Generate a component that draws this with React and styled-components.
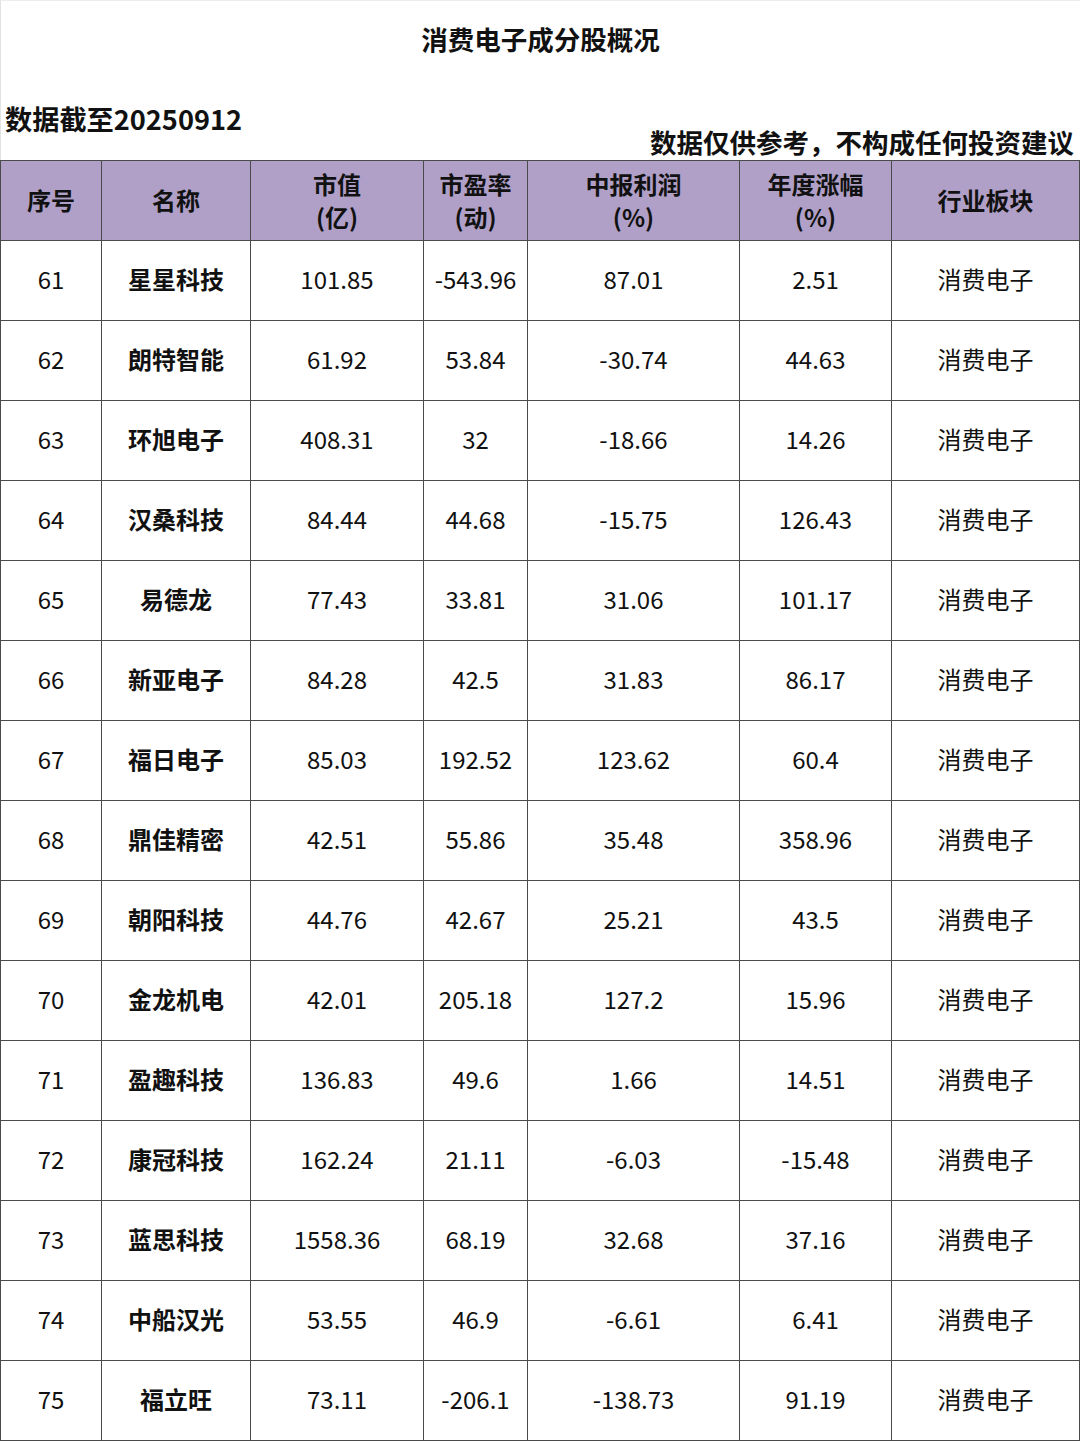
import React from "react";
import styled, { createGlobalStyle } from "styled-components";

const Global = createGlobalStyle`
  html, body { margin: 0; padding: 0; background: #fff; }
  body { font-family: "Noto Sans CJK SC", "Noto Sans", sans-serif; color: #111; }
`;

const Page = styled.div`
  width: 1080px;
  height: 1441px;
  box-sizing: border-box;
  border-left: 1px solid #e2e2e2;
  border-top: 1px solid #ececec;
  background: #fff;
`;

const Top = styled.div`
  height: 159px;
  display: flex;
  flex-direction: column;
`;

const Title = styled.h1`
  margin: 0;
  height: 80px;
  line-height: 76px;
  text-align: center;
  font-size: 26.5px;
  font-weight: 700;
`;

const InfoRow = styled.div`
  flex: 1;
  display: flex;
  justify-content: space-between;
  align-items: flex-end;
  padding: 0 6px 0 4px;
`;

const DateNote = styled.div`
  font-size: 27.2px;
  font-weight: 700;
  line-height: 36px;
  margin-bottom: 24px;
`;

const Disclaimer = styled.div`
  font-size: 26.5px;
  font-weight: 700;
  line-height: 34px;
  margin-bottom: 1px;
`;

const Table = styled.table`
  border-collapse: collapse;
  table-layout: fixed;
  width: 1079px;
  margin-left: -1px;
`;

const HeadCell = styled.th`
  background: #b0a0c8;
  border: 1px solid #4a4a4a;
  height: 77px;
  padding: 0 0 2px;
  font-size: 24px;
  font-weight: 700;
  line-height: 33px;
  text-align: center;
  vertical-align: middle;
`;

const Cell = styled.td`
  border: 1px solid #4a4a4a;
  height: 75px;
  padding: 0 0 4px;
  font-size: 24px;
  font-weight: ${(p) => (p.$bold ? 700 : 400)};
  text-align: center;
  vertical-align: middle;
`;

const widths = [101, 149, 173, 104, 212, 152, 188];
const headers = [
  ["序号"],
  ["名称"],
  ["市值", "(亿)"],
  ["市盈率", "(动)"],
  ["中报利润", "(%)"],
  ["年度涨幅", "(%)"],
  ["行业板块"],
];

const rows = [
  ["61", "星星科技", "101.85", "-543.96", "87.01", "2.51"],
  ["62", "朗特智能", "61.92", "53.84", "-30.74", "44.63"],
  ["63", "环旭电子", "408.31", "32", "-18.66", "14.26"],
  ["64", "汉桑科技", "84.44", "44.68", "-15.75", "126.43"],
  ["65", "易德龙", "77.43", "33.81", "31.06", "101.17"],
  ["66", "新亚电子", "84.28", "42.5", "31.83", "86.17"],
  ["67", "福日电子", "85.03", "192.52", "123.62", "60.4"],
  ["68", "鼎佳精密", "42.51", "55.86", "35.48", "358.96"],
  ["69", "朝阳科技", "44.76", "42.67", "25.21", "43.5"],
  ["70", "金龙机电", "42.01", "205.18", "127.2", "15.96"],
  ["71", "盈趣科技", "136.83", "49.6", "1.66", "14.51"],
  ["72", "康冠科技", "162.24", "21.11", "-6.03", "-15.48"],
  ["73", "蓝思科技", "1558.36", "68.19", "32.68", "37.16"],
  ["74", "中船汉光", "53.55", "46.9", "-6.61", "6.41"],
  ["75", "福立旺", "73.11", "-206.1", "-138.73", "91.19"],
];

export default function App() {
  return (
    <Page>
      <Global />
      <Top>
        <Title>消费电子成分股概况</Title>
        <InfoRow>
          <DateNote>数据截至20250912</DateNote>
          <Disclaimer>数据仅供参考，不构成任何投资建议</Disclaimer>
        </InfoRow>
      </Top>
      <Table>
        <colgroup>
          {widths.map((w, i) => (
            <col key={i} style={{ width: w }} />
          ))}
        </colgroup>
        <thead>
          <tr>
            {headers.map((h, i) => (
              <HeadCell key={i}>
                {h.map((line, j) => (
                  <div key={j}>{line}</div>
                ))}
              </HeadCell>
            ))}
          </tr>
        </thead>
        <tbody>
          {rows.map((r) => (
            <tr key={r[0]}>
              <Cell>{r[0]}</Cell>
              <Cell $bold>{r[1]}</Cell>
              <Cell>{r[2]}</Cell>
              <Cell>{r[3]}</Cell>
              <Cell>{r[4]}</Cell>
              <Cell>{r[5]}</Cell>
              <Cell>消费电子</Cell>
            </tr>
          ))}
        </tbody>
      </Table>
    </Page>
  );
}
